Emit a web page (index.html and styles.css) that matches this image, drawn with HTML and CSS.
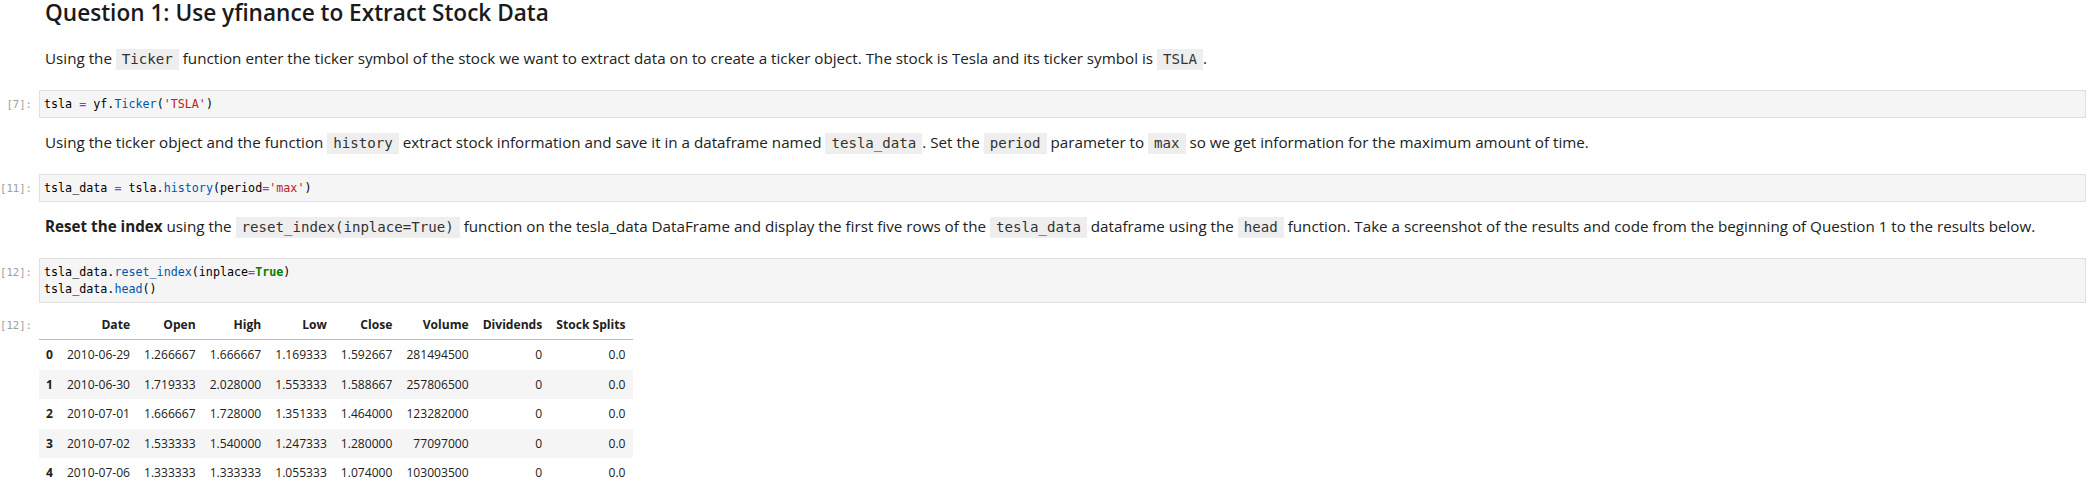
FILE: index.html
```html
<!DOCTYPE html>
<html>
<head>
<meta charset="utf-8">
<link rel="stylesheet" href="styles.css">
</head>
<body>
<div class="nb">
  <div class="cell md first">
    <div class="prompt"></div>
    <div class="md-body">
      <h2 class="title">Question 1: Use yfinance to Extract Stock Data</h2>
      <p class="para">Using the <code class="ic">Ticker</code> function enter the ticker symbol of the stock we want to extract data on to create a ticker object. The stock is Tesla and its ticker symbol is <code class="ic">TSLA</code>.</p>
    </div>
  </div>

  <div class="cell code">
    <div class="prompt">[7]:</div>
    <div class="editor"><pre class="src">tsla <span class="op">=</span> yf.<span class="pr">Ticker</span>(<span class="st">'TSLA'</span>)</pre></div>
  </div>

  <div class="cell md">
    <div class="prompt"></div>
    <div class="md-body">
      <p class="para">Using the ticker object and the function <code class="ic">history</code> extract stock information and save it in a dataframe named <code class="ic">tesla_data</code>. Set the <code class="ic">period</code> parameter to <code class="ic">max</code> so we get information for the maximum amount of time.</p>
    </div>
  </div>

  <div class="cell code">
    <div class="prompt">[11]:</div>
    <div class="editor"><pre class="src">tsla_data <span class="op">=</span> tsla.<span class="pr">history</span>(period<span class="op">=</span><span class="st">'max'</span>)</pre></div>
  </div>

  <div class="cell md">
    <div class="prompt"></div>
    <div class="md-body">
      <p class="para"><strong>Reset the index</strong> using the <code class="ic">reset_index(inplace=True)</code> function on the tesla_data DataFrame and display the first five rows of the <code class="ic">tesla_data</code> dataframe using the <code class="ic">head</code> function. Take a screenshot of the results and code from the beginning of Question 1 to the results below.</p>
    </div>
  </div>

  <div class="cell code">
    <div class="prompt">[12]:</div>
    <div class="editor"><pre class="src"><span class="ln">tsla_data.<span class="pr">reset_index</span>(inplace<span class="op">=</span><span class="kw">True</span>)</span>
<span class="ln">tsla_data.<span class="pr">head</span>()</span></pre></div>
  </div>

  <div class="cell out">
    <div class="prompt out-prompt">[12]:</div>
    <div class="out-body">
      <table class="df">
        <thead>
          <tr><th></th><th>Date</th><th>Open</th><th>High</th><th>Low</th><th>Close</th><th>Volume</th><th>Dividends</th><th>Stock Splits</th></tr>
        </thead>
        <tbody>
          <tr><th>0</th><td>2010-06-29</td><td>1.266667</td><td>1.666667</td><td>1.169333</td><td>1.592667</td><td>281494500</td><td>0</td><td>0.0</td></tr>
          <tr><th>1</th><td>2010-06-30</td><td>1.719333</td><td>2.028000</td><td>1.553333</td><td>1.588667</td><td>257806500</td><td>0</td><td>0.0</td></tr>
          <tr><th>2</th><td>2010-07-01</td><td>1.666667</td><td>1.728000</td><td>1.351333</td><td>1.464000</td><td>123282000</td><td>0</td><td>0.0</td></tr>
          <tr><th>3</th><td>2010-07-02</td><td>1.533333</td><td>1.540000</td><td>1.247333</td><td>1.280000</td><td>77097000</td><td>0</td><td>0.0</td></tr>
          <tr><th>4</th><td>2010-07-06</td><td>1.333333</td><td>1.333333</td><td>1.055333</td><td>1.074000</td><td>103003500</td><td>0</td><td>0.0</td></tr>
        </tbody>
      </table>
    </div>
  </div>
</div>
</body>
</html>
```

FILE: styles.css
```css
html, body {
  margin: 0;
  padding: 0;
  background: #ffffff;
}

.nb {
  padding: 0 12px 0 0;
  font-family: "Open Sans", "Noto Sans", sans-serif;
  color: #212121;
}

.cell {
  display: flex;
  align-items: flex-start;
}

.prompt {
  flex: 0 0 39px;
  width: 39px;
  box-sizing: border-box;
  padding-right: 7px;
  text-align: right;
  font-family: "DejaVu Sans Mono", monospace;
  font-size: 10.6px;
  color: #a0a0a0;
  white-space: nowrap;
  line-height: 17px;
  padding-top: 6px;
}

.md-body {
  flex: 1 1 auto;
  padding-left: 6px;
  min-width: 0;
}

.title {
  margin: 0;
  font-size: 22.6px;
  line-height: 26px;
  font-weight: 600;
  color: #1a1a1a;
}

.para {
  margin: 13.5px 0 20.5px;
  font-size: 15.2px;
  line-height: 21px;
  white-space: nowrap;
}

.first .para {
  margin-top: 21.5px;
}

.para strong {
  font-weight: 700;
}

.ic {
  display: inline-block;
  font-family: "DejaVu Sans Mono", monospace;
  font-size: 14.1px;
  line-height: 21px;
  padding: 0 6px;
  background: #eeeeee;
  color: #333333;
}

.editor {
  flex: 1 1 auto;
  background: #f5f5f5;
  border: 1px solid #e0e0e0;
  padding: 5px 4px 4px;
  min-width: 0;
}

.src {
  margin: 0;
  font-family: "DejaVu Sans Mono", monospace;
  font-size: 11.7px;
  line-height: 17px;
  color: #000000;
}

.op { color: #aa22ff; }
.pr { color: #0055aa; }
.st { color: #ba2121; }
.kw { color: #008000; font-weight: bold; }

.out {
  margin-top: 8px;
}

.out-prompt {
  padding-top: 6px;
}

.out-body {
  flex: 1 1 auto;
}

.df {
  border-collapse: collapse;
  border-spacing: 0;
  font-size: 12.1px;
  color: #212121;
}

.df th, .df td {
  padding: 7px 7px 6px;
  line-height: 16px;
  text-align: right;
  white-space: nowrap;
  vertical-align: middle;
}

.df th {
  font-weight: 700;
}

.df thead th {
  padding: 6px 7px 6px;
  border-bottom: 1px solid #bdbdbd;
}

.df tbody tr:nth-child(even) {
  background: #f5f5f5;
}

.df tbody td, .df tbody th {
  height: 16.5px;
}
```
